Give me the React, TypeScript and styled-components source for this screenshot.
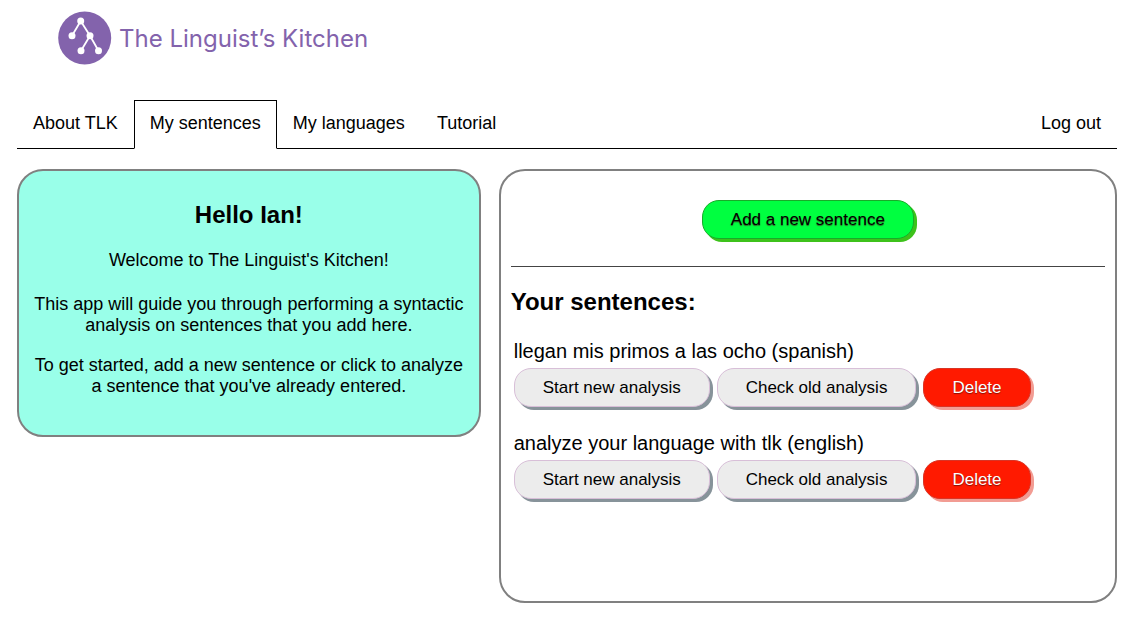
import React from "react";
import styled, { createGlobalStyle } from "styled-components";

const GlobalStyle = createGlobalStyle`
  * { box-sizing: border-box; }
  body {
    margin: 0;
    background: #fff;
    color: #000;
    font-family: "Liberation Sans", Arial, sans-serif;
    font-size: 18px;
    line-height: 21px;
  }
  h2, p, ul { margin: 0; padding: 0; }
`;

const Page = styled.div`
  padding: 11px 26px 23px 17px;
`;

const Brand = styled.a`
  display: inline-flex;
  align-items: center;
  gap: 7px;
  margin: 0 0 35px 41px;
  color: #8363ac;
  text-decoration: none;
  vertical-align: top;
`;

const BrandName = styled.span`
  padding-top: 2px;
  font-family: Inter, "Liberation Sans", sans-serif;
  font-size: 24px;
  font-weight: 400;
  line-height: 30px;
`;

const Nav = styled.nav`
  display: flex;
  border-bottom: 1px solid #000;
`;

const Tab = styled.a<{ $active?: boolean; $end?: boolean }>`
  padding: 12px 15px 14px;
  border: 1px solid transparent;
  margin-bottom: -1px;
  margin-left: ${(p) => (p.$end ? "auto" : "0")};
  color: #000;
  text-decoration: none;
  ${(p) => p.$active && "border-color: #000 #000 #fff;"}
`;

const Columns = styled.main`
  display: grid;
  grid-template-columns: 3fr 4fr;
  gap: 18px;
  align-items: start;
  margin-top: 20px;
`;

const Card = styled.section`
  border: 2px solid #808080;
  border-radius: 26px;
`;

const Welcome = styled(Card)`
  padding: 30px 12px 38px;
  background: #99ffe9;
  text-align: center;
`;

const Title = styled.h2`
  font-size: 24px;
  line-height: 28px;
`;

const Lead = styled.p`
  margin: 21px 0 23px;
`;

const Text = styled.p`
  & + & { margin-top: 19px; }
`;

const Sentences = styled(Card)`
  min-height: 434px;
  padding: 29px 10px;
`;

const AddRow = styled.div`
  display: flex;
  justify-content: center;
  padding-bottom: 27px;
  margin-bottom: 21px;
  border-bottom: 1px solid #444;
`;

const looks = {
  plain: ["#ececec", "#d8bfd8", "#87939a", "#000", "none"],
  add: ["#00ff40", "#18ab29", "#3dc21b", "#000", "0 1px 1px #2f6627"],
  remove: ["#ff1a00", "#d83526", "#f29c93", "#fff", "0 1px 1px #810e05"],
};

const Button = styled.button<{ $look?: keyof typeof looks }>`
  height: 39px;
  padding: 0 28px;
  border: 1px solid ${(p) => looks[p.$look ?? "plain"][1]};
  border-radius: 17px;
  background: ${(p) => looks[p.$look ?? "plain"][0]};
  box-shadow: 3px 3px 0 ${(p) => looks[p.$look ?? "plain"][2]};
  color: ${(p) => looks[p.$look ?? "plain"][3]};
  text-shadow: ${(p) => looks[p.$look ?? "plain"][4]};
  font-family: inherit;
  font-size: 17px;
  line-height: 20px;
  cursor: pointer;
`;

const List = styled.ul`
  display: grid;
  gap: 25px;
  margin-top: 24px;
  padding-left: 3px;
  list-style: none;
`;

const Sentence = styled.p`
  margin-bottom: 5px;
  font-size: 20px;
  line-height: 23px;
`;

const Actions = styled.div`
  display: flex;
  flex-wrap: wrap;
  gap: 7px;
`;

const Logo = () => (
  <svg width="54" height="54" viewBox="0 0 54 54" aria-hidden="true">
    <circle cx="26.7" cy="27" r="26.5" fill="#8363ac" />
    <path
      d="M14 24.7 22.7 10 32 24.7 40.5 39.7M32 24.7 23 39.7"
      fill="none"
      stroke="#fff"
      strokeWidth="1.8"
    />
    <g fill="#fff">
      <circle cx="22.7" cy="10" r="3.5" />
      <circle cx="14" cy="24.7" r="3.5" />
      <circle cx="32" cy="24.7" r="3.5" />
      <circle cx="23" cy="39.7" r="3.5" />
      <circle cx="40.5" cy="39.7" r="3.5" />
    </g>
  </svg>
);

const sentences = [
  "llegan mis primos a las ocho (spanish)",
  "analyze your language with tlk (english)",
];

export default function App() {
  return (
    <Page>
      <GlobalStyle />
      <header>
        <Brand href="#home">
          <Logo />
          <BrandName>The Linguist’s Kitchen</BrandName>
        </Brand>
        <Nav>
          <Tab href="#about">About TLK</Tab>
          <Tab href="#sentences" $active aria-current="page">My sentences</Tab>
          <Tab href="#languages">My languages</Tab>
          <Tab href="#tutorial">Tutorial</Tab>
          <Tab href="#logout" $end>Log out</Tab>
        </Nav>
      </header>
      <Columns>
        <Welcome>
          <Title>Hello Ian!</Title>
          <Lead>Welcome to The Linguist's Kitchen!</Lead>
          <Text>
            This app will guide you through performing a syntactic analysis on
            sentences that you add here.
          </Text>
          <Text>
            To get started, add a new sentence or click to analyze a sentence
            that you've already entered.
          </Text>
        </Welcome>
        <Sentences>
          <AddRow>
            <Button type="button" $look="add">Add a new sentence</Button>
          </AddRow>
          <Title>Your sentences:</Title>
          <List>
            {sentences.map((sentence) => (
              <li key={sentence}>
                <Sentence>{sentence}</Sentence>
                <Actions>
                  <Button type="button">Start new analysis</Button>
                  <Button type="button">Check old analysis</Button>
                  <Button type="button" $look="remove">Delete</Button>
                </Actions>
              </li>
            ))}
          </List>
        </Sentences>
      </Columns>
    </Page>
  );
}
